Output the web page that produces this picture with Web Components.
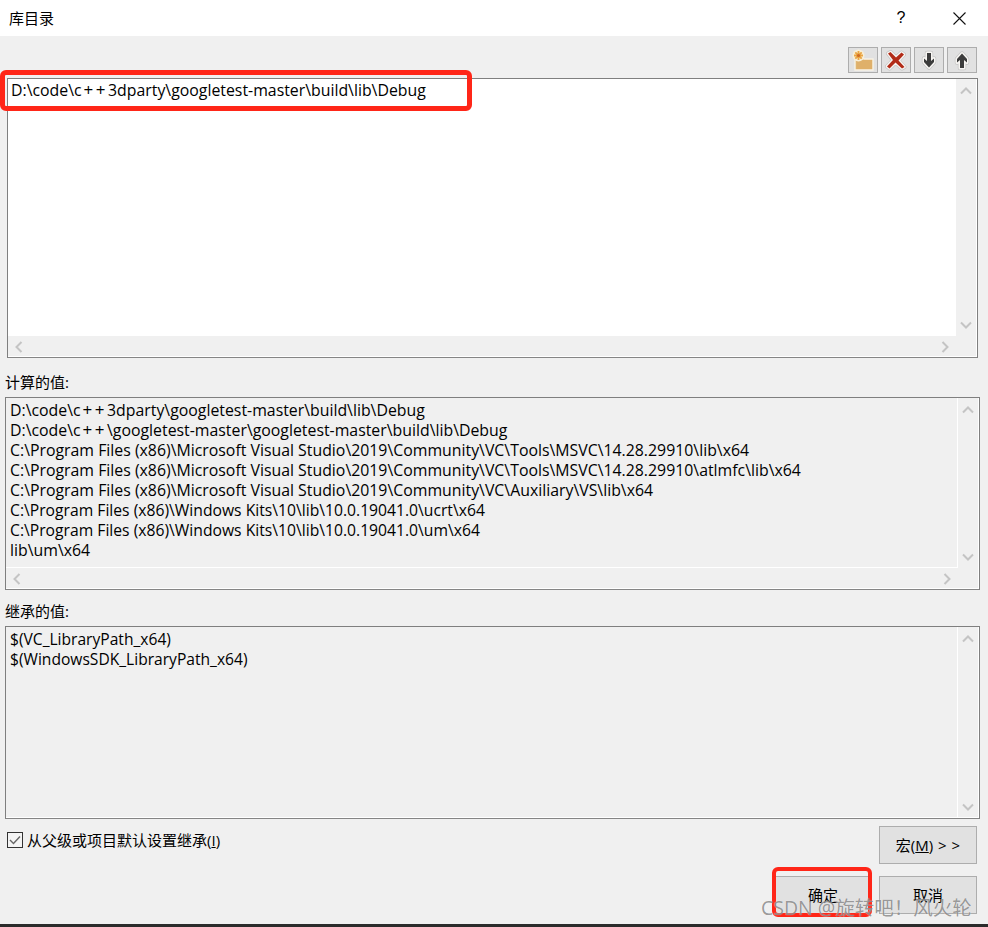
<!DOCTYPE html>
<html lang="zh"><head><meta charset="utf-8"><title>库目录</title>
<style>html,body{margin:0;padding:0;background:#f0f0f0}
body{font-family:"Open Sans","Noto Sans CJK SC",sans-serif}
.pp{font-size:17px;line-height:1;letter-spacing:2.5px;margin-left:2px}
.kit{font-size:15.7px}</style></head>
<body>
<lib-dialog>
  <title-bar slot="title">库目录</title-bar>
  <icon-button slot="tools" icon="new"></icon-button>
  <icon-button slot="tools" icon="del"></icon-button>
  <icon-button slot="tools" icon="down"></icon-button>
  <icon-button slot="tools" icon="up"></icon-button>
  <list-box slot="edit" variant="edit"><div>D:\code\c<span class="pp">++</span>3dparty\googletest-master\build\lib\Debug</div></list-box>
  <field-label slot="l1">计算的值:</field-label>
  <list-box slot="computed">
    <div>D:\code\c<span class="pp">++</span>3dparty\googletest-master\build\lib\Debug</div>
    <div>D:\code\c<span class="pp">++</span>\googletest-master\googletest-master\build\lib\Debug</div>
    <div>C:\Program Files (x86)\Microsoft Visual Studio\2019\Community\VC\Tools\MSVC\14.28.29910\lib\x64</div>
    <div>C:\Program Files (x86)\Microsoft Visual Studio\2019\Community\VC\Tools\MSVC\14.28.29910\atlmfc\lib\x64</div>
    <div>C:\Program Files (x86)\Microsoft Visual Studio\2019\Community\VC\Auxiliary\VS\lib\x64</div>
    <div class="kit">C:\Program Files (x86)\Windows Kits\10\lib\10.0.19041.0\ucrt\x64</div>
    <div class="kit">C:\Program Files (x86)\Windows Kits\10\lib\10.0.19041.0\um\x64</div>
    <div>lib\um\x64</div>
  </list-box>
  <field-label slot="l2" style="height:36px">继承的值:</field-label>
  <list-box slot="inherited" nohbar>
    <div>$(VC_LibraryPath_x64)</div>
    <div>$(WindowsSDK_LibraryPath_x64)</div>
  </list-box>
  <check-row slot="check">从父级或项目默认设置继承(<u>I</u>)</check-row>
  <push-button slot="macro" style="width:98px;height:38px">宏(<u>M</u>) &gt; &gt;</push-button>
  <push-button slot="ok" style="width:96px;height:38px">确定</push-button>
  <push-button slot="cancel" style="width:98px;height:38px">取消</push-button>
</lib-dialog>
<script>
function def(name, css, html){
  customElements.define(name, class extends HTMLElement{
    constructor(){super();
      const r=this.attachShadow({mode:'open'});
      r.innerHTML='<style>'+css+'</style>'+(typeof html==='function'?html(this):html);
    }
  });
}
def('lib-dialog',`
:host{display:flex;flex-direction:column;position:relative;width:988px;height:927px;background:#f0f0f0;color:#000;overflow:hidden;
  font:15.85px/20px "Open Sans","Noto Sans CJK SC",sans-serif}
.tools{display:flex;justify-content:flex-end;gap:3px;height:26px;margin:11px 11px 5px 0}
.edit{display:block;margin-left:7px;margin-right:10px}
.wide{display:block;margin-left:5px;margin-right:8px}
.bottom{flex:1;display:grid;grid-template-columns:1fr 96px 98px;column-gap:8px;grid-template-rows:45px 38px;padding-right:11px;padding-left:7px}
.check{grid-column:1 / 3;grid-row:1;padding-top:13px}
.macro{grid-column:3;grid-row:1;padding-top:7px}
.ok{grid-column:2;grid-row:2;margin-top:12px}
.cancel{grid-column:3;grid-row:2;margin-top:12px}
.foot{height:3px;background:#2b2b2b;flex:none}
.mark{position:absolute;border:5px solid #ff2618;border-radius:6px;box-sizing:border-box;pointer-events:none}
.wm{position:absolute;left:761px;top:894px;font:19.5px/28px "Open Sans","Noto Sans CJK SC",sans-serif;color:rgba(90,90,90,.62);
  text-shadow:0 0 1px rgba(255,255,255,.8);white-space:nowrap}
`,`
<slot name="title"></slot>
<div class="tools"><slot name="tools"></slot></div>
<div class="edit"><slot name="edit"></slot></div>
<slot name="l1"></slot>
<div class="wide"><slot name="computed"></slot></div>
<slot name="l2"></slot>
<div class="wide"><slot name="inherited"></slot></div>
<div class="bottom">
  <div class="check"><slot name="check"></slot></div>
  <div class="macro"><slot name="macro"></slot></div>
  <div class="ok"><slot name="ok"></slot></div>
  <div class="cancel"><slot name="cancel"></slot></div>
</div>
<div class="foot"></div>
<div class="mark" style="left:0;top:70px;width:472px;height:41px"></div>
<div class="mark" style="left:772px;top:867px;width:100px;height:50px;border-width:4px"></div>
<div class="wm">CSDN @旋转吧！风火轮</div>
`);
def('title-bar',`
:host{display:flex;align-items:center;height:36px;background:#fff;padding-left:9px;font-size:15px;flex:none}
.t{flex:1}
.q{width:20px;text-align:center;margin-right:42px;font:16px "Liberation Sans",sans-serif}
svg{margin-right:22px}
`,`<div class="t"><slot></slot></div><div class="q">?</div>
<svg width="13" height="13" viewBox="0 0 13 13"><path d="M.5.5l12 12M12.5.5l-12 12" stroke="#111" stroke-width="1.1" fill="none"/></svg>`);
const halo=(d,fill,w)=>`<path d="${d}" fill="none" stroke="#c4c4c4" stroke-width="${w+1.4}" stroke-linejoin="round"/><path d="${d}" fill="#f7f5f2" stroke="#f7f5f2" stroke-width="${w}" stroke-linejoin="round"/><path d="${d}" fill="${fill}"/>`;
const ICONS={
 new:`<svg width="24" height="22" viewBox="0 0 24 22"><path d="M4 8h7l2 2h9v11H4z" fill="#e0b775" stroke="#f7f2e6" stroke-width="1.4"/><path d="M5.500 11h15.500v9H5.500z" fill="#dfb06a"/><circle cx="7.500" cy="6.500" r="6" fill="#f8efd8"/><path d="M7.500 2v9M3 6.500h9M4.300 3.300l6.400 6.400M10.700 3.300L4.300 9.700" stroke="#eaa644" stroke-width="1.900"/><circle cx="7.500" cy="6.500" r="1.600" fill="#cf6a22"/></svg>`,
 del:`<svg width="24" height="22" viewBox="0 0 24 22">${halo('M4 4.500l2.500-1.500 5.500 5.500 5.500-5 2.500 2-5.500 6 6 6.500-2.500 1.500-6.500-6-6 6-2.500-2 6-6.500z','#b22c18',2.6)}</svg>`,
 down:`<svg width="22" height="22" viewBox="0 0 22 22">${halo('M9 4h4v8l3-2.500v3.500l-5 5.500L6 13V9.500l3 2.500z','#3c3c3c',3)}</svg>`,
 up:`<svg width="22" height="22" viewBox="0 0 22 22">${halo('M9 19h4v-8l3 2.500V10L11 4.500 6 10v3.500L9 11z','#3c3c3c',3)}</svg>`
};
def('icon-button',`
:host{display:flex;align-items:center;justify-content:center;box-sizing:border-box;width:30px;height:26px;background:#e1e1e1;border:1px solid #adadad}
svg{display:block}
`,el=>ICONS[el.getAttribute('icon')]);
const chev=(d)=>({
 up:`<svg width="12" height="8" viewBox="0 0 12 8"><path d="M1 6.500l5-5 5 5" fill="none" stroke="#c4c4c4" stroke-width="2"/></svg>`,
 down:`<svg width="12" height="8" viewBox="0 0 12 8"><path d="M1 1.500l5 5 5-5" fill="none" stroke="#c4c4c4" stroke-width="2"/></svg>`,
 left:`<svg width="8" height="12" viewBox="0 0 8 12"><path d="M6.500 1l-5 5 5 5" fill="none" stroke="#c4c4c4" stroke-width="2"/></svg>`,
 right:`<svg width="8" height="12" viewBox="0 0 8 12"><path d="M1.500 1l5 5-5 5" fill="none" stroke="#c4c4c4" stroke-width="2"/></svg>`}[d]);
def('list-box',`
:host{display:grid;box-sizing:border-box;height:193px;border:1px solid #7f7f7f;border-bottom-color:#858585;grid-template-columns:1fr 21px;grid-template-rows:1fr 21px;background:#f0f0f0;box-shadow:inset -1px -1px 0 #fff;white-space:nowrap}
:host([variant=edit]){height:280px}
:host([nohbar]){grid-template-rows:1fr}
:host([nohbar]) .h,:host([nohbar]) .k{display:none}
:host([nohbar]){font-size:15.6px}
:host([nohbar]) .c{border-bottom:0}
.c{padding:2px 4px;overflow:hidden;border-right:1px solid #fff;border-bottom:1px solid #fff;min-width:0}
:host([variant=edit]) .c{border:0;background:#fff;padding:1px 3px}
.v{display:flex;flex-direction:column;justify-content:space-between;align-items:center;padding:8px 2px 7px 0;box-sizing:border-box}
.h{display:flex;justify-content:space-between;align-items:center;padding:0 7px}
`,`<div class="c"><slot></slot></div><div class="v">${chev('up')}${chev('down')}</div><div class="h">${chev('left')}${chev('right')}</div><div class="k"></div>`);
def('field-label',`:host{display:flex;align-items:flex-end;box-sizing:border-box;height:39px;padding:0 0 5px 5px;font-size:15px;line-height:20px}`,`<slot></slot>`);
def('check-row',`
:host{display:flex;align-items:center;gap:4px;font-size:15px;height:16px;white-space:nowrap}
.b{box-sizing:border-box;width:16px;height:16px;border:1px solid #333;background:#f4f4f4;display:flex;align-items:center;justify-content:center}
`,`<div class="b"><svg width="12" height="10" viewBox="0 0 12 10"><path d="M1 5l3.500 3.500L11 1.500" fill="none" stroke="#666" stroke-width="1.400"/></svg></div><span><slot></slot></span>`);
def('push-button',`
:host{display:flex;align-items:center;justify-content:center;box-sizing:border-box;background:#e1e1e1;border:1px solid #adadad;font-size:15px;word-spacing:1px}
`,`<span><slot></slot></span>`);
</script>
</body></html>
